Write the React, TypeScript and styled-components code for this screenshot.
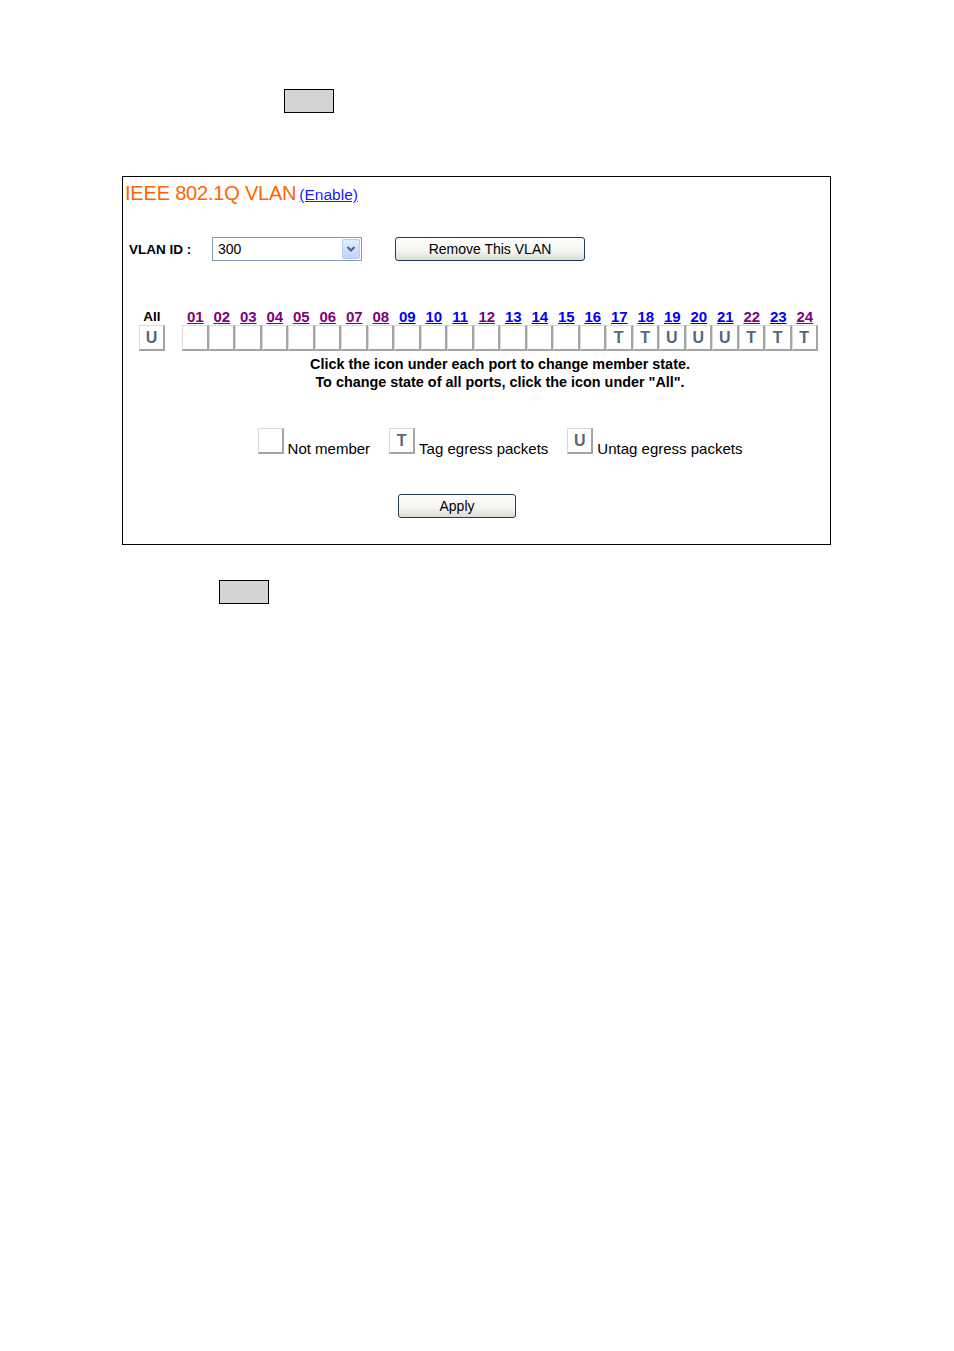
import React from "react";
import styled, { createGlobalStyle } from "styled-components";

const Global = createGlobalStyle`
  html, body { margin: 0; padding: 0; background: #ffffff; }
  body { font-family: "Liberation Sans", Arial, sans-serif; color: #000; }
  * { box-sizing: border-box; }
`;

const Page = styled.div`
  width: 954px;
  height: 1351px;
  display: flex;
  flex-direction: column;
  align-items: flex-start;
`;

const GrayBox = styled.div<{ $left: number; $top: number }>`
  margin-left: ${(p) => p.$left}px;
  margin-top: ${(p) => p.$top}px;
  width: 50px;
  height: 24px;
  background: #d4d4d4;
  border: 1.5px solid #000;
`;

const Frame = styled.div`
  margin-left: 122px;
  margin-top: 63px;
  width: 709px;
  height: 369px;
  border: 1px solid #000;
  display: flex;
  flex-direction: column;
`;

const TitleRow = styled.div`
  margin: 5px 0 0 2px;
  display: flex;
  align-items: baseline;
  gap: 3px;
  line-height: 22px;
`;

const Title = styled.span`
  color: #ff6600;
  font-size: 20px;
  letter-spacing: -0.2px;
`;

const EnableLink = styled.a`
  color: #1a1aff;
  font-size: 15.5px;
  text-decoration: underline;
  cursor: pointer;
`;

const VlanRow = styled.div`
  margin: 31px 0 0 6px;
  display: flex;
  align-items: center;
  height: 24px;
`;

const VlanLabel = styled.span`
  width: 83px;
  font-weight: bold;
  font-size: 13.5px;
`;

const Select = styled.div`
  width: 150px;
  height: 24px;
  border: 1px solid #7f9db9;
  display: flex;
  align-items: center;
  justify-content: space-between;
  padding: 1px 1px 1px 5px;
  font-size: 14px;
  background: #fff;
`;

const SelectArrow = styled.div`
  width: 18px;
  height: 20px;
  border: 1px solid #b9cbf0;
  border-radius: 2px;
  background: linear-gradient(#e3ecfd, #c1d3fb);
  display: flex;
  align-items: center;
  justify-content: center;
`;

const XpButton = styled.button<{ $width: number }>`
  width: ${(p) => p.$width}px;
  height: 24px;
  border: 1px solid #1f3b5a;
  border-radius: 3px;
  background: linear-gradient(#ffffff 0%, #f4f4f0 60%, #dcdcd4 100%);
  font-family: "Liberation Sans", Arial, sans-serif;
  font-size: 14px;
  color: #000;
  padding: 0;
`;

const RemoveButton = styled(XpButton)`
  margin-left: 33px;
`;

const PortArea = styled.div`
  margin-top: 48px;
  display: flex;
  align-items: flex-start;
`;

const AllCol = styled.div`
  margin-left: 16px;
  width: 26px;
  display: flex;
  flex-direction: column;
  align-items: center;
`;

const PortCol = styled.div`
  margin-left: 17px;
  width: 636px;
  display: flex;
  flex-direction: column;
  align-items: stretch;
`;

const LabelRow = styled.div`
  display: grid;
  grid-template-columns: repeat(24, 26.5px);
  height: 16px;
`;

const AllLabel = styled.div`
  height: 16px;
  line-height: 16px;
  font-weight: bold;
  font-size: 13.5px;
`;

const PortLink = styled.a<{ $visited: boolean }>`
  text-align: center;
  line-height: 16px;
  font-weight: bold;
  font-size: 15px;
  color: ${(p) => (p.$visited ? "#800080" : "#0000ff")};
  text-decoration: underline;
  cursor: pointer;
`;

const CellRow = styled.div`
  display: grid;
  grid-template-columns: repeat(24, 26.5px);
`;

const Cell = styled.div`
  height: 26px;
  background: #fff;
  border-top: 1px solid #dadada;
  border-left: 1px solid #dadada;
  border-right: 2px solid #a4a4a4;
  border-bottom: 2px solid #a4a4a4;
  display: flex;
  align-items: center;
  justify-content: center;
  font-family: "Liberation Sans", Arial, sans-serif;
  font-weight: bold;
  font-size: 16px;
  color: #56677a;
  cursor: pointer;
`;

const AllCell = styled(Cell)`
  width: 26px;
`;

const Hint = styled.div`
  margin-top: 4px;
  text-align: center;
  font-weight: bold;
  font-size: 14.4px;
  line-height: 18px;
`;

const Legend = styled.div`
  margin-top: 37px;
  display: flex;
  justify-content: center;
  align-items: flex-end;
`;

const LegendItem = styled.div`
  display: flex;
  align-items: flex-end;
  gap: 4px;
  margin: 0 9.5px;
`;

const LegendCell = styled(Cell)`
  width: 26px;
`;

const LegendText = styled.span`
  font-size: 15px;
  line-height: 15px;
  margin-bottom: -2px;
`;

const ApplyRow = styled.div`
  margin: 40px 0 0 275px;
`;

const ports = [
  "", "", "", "", "", "", "", "", "", "", "", "", "", "", "", "",
  "T", "T", "U", "U", "U", "T", "T", "T",
];
const visited = new Set([1, 2, 3, 4, 5, 6, 7, 8, 12, 22, 24]);

export default function App() {
  return (
    <Page>
      <Global />
      <GrayBox $left={284} $top={89} />
      <Frame>
        <TitleRow>
          <Title>IEEE 802.1Q VLAN</Title>
          <EnableLink>(Enable)</EnableLink>
        </TitleRow>
        <VlanRow>
          <VlanLabel>VLAN ID :</VlanLabel>
          <Select>
            <span>300</span>
            <SelectArrow>
              <svg width="10" height="8" viewBox="0 0 10 8">
                <path d="M1.5 2 L5 5.5 L8.5 2" fill="none" stroke="#4d6185" strokeWidth="2" />
              </svg>
            </SelectArrow>
          </Select>
          <RemoveButton $width={190}>Remove This VLAN</RemoveButton>
        </VlanRow>
        <PortArea>
          <AllCol>
            <AllLabel>All</AllLabel>
            <AllCell>U</AllCell>
          </AllCol>
          <PortCol>
            <LabelRow>
              {ports.map((_, i) => (
                <PortLink key={i} $visited={visited.has(i + 1)}>
                  {String(i + 1).padStart(2, "0")}
                </PortLink>
              ))}
            </LabelRow>
            <CellRow>
              {ports.map((s, i) => (
                <Cell key={i}>{s}</Cell>
              ))}
            </CellRow>
            <Hint>
              Click the icon under each port to change member state.
              <br />
              To change state of all ports, click the icon under "All".
            </Hint>
            <Legend>
              <LegendItem>
                <LegendCell />
                <LegendText>Not member</LegendText>
              </LegendItem>
              <LegendItem>
                <LegendCell>T</LegendCell>
                <LegendText>Tag egress packets</LegendText>
              </LegendItem>
              <LegendItem>
                <LegendCell>U</LegendCell>
                <LegendText>Untag egress packets</LegendText>
              </LegendItem>
            </Legend>
          </PortCol>
        </PortArea>
        <ApplyRow>
          <XpButton $width={118}>Apply</XpButton>
        </ApplyRow>
      </Frame>
      <GrayBox $left={219} $top={35} />
    </Page>
  );
}
